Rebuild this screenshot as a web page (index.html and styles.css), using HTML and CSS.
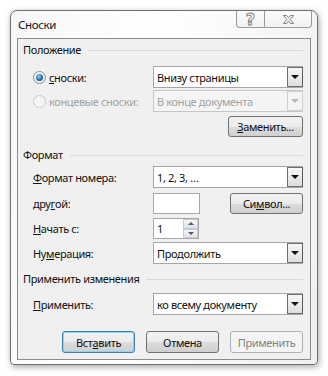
FILE: index.html
```html
<!DOCTYPE html>
<html lang="ru">
<head>
<meta charset="UTF-8">
<title>Сноски</title>
<link rel="stylesheet" href="styles.css">
</head>
<body>

<div class="window">
  <div class="titlebar">
    <span class="title">Сноски</span>
    <div class="caption-btns">
      <span class="cap cap-help"><span class="help-glyph">?</span></span>
      <span class="cap cap-close">
        <svg width="13" height="11" viewBox="0 0 13 11">
          <path d="M1.5 1.5 H4.5 L6.5 3.8 L8.5 1.5 H11.5 L8.2 5.5 L11.5 9.5 H8.5 L6.5 7.2 L4.5 9.5 H1.5 L4.8 5.5 Z" fill="none" stroke="#7d7d7d" stroke-width="1"/>
        </svg>
      </span>
    </div>
  </div>

  <div class="client">
    <div class="group-title">Положение</div>

    <div class="row r-footnote">
      <span class="label"><span class="radio checked"></span><u>с</u>носки:</span>
      <div class="combo"><span class="combo-text">Внизу страницы</span><span class="combo-btn"></span></div>
    </div>
    <div class="row r-endnote">
      <span class="label disabled"><span class="radio"></span>концевые сноски:</span>
      <div class="combo combo-off"><span class="combo-text">В конце документа</span><span class="combo-btn"></span></div>
    </div>
    <div class="row r-convert">
      <button class="btn btn-convert"><u>З</u>аменить...</button>
    </div>

    <div class="group-title g-format">Формат</div>

    <div class="row r-numfmt">
      <span class="label"><u>Ф</u>ормат номера:</span>
      <div class="combo"><span class="combo-text">1, 2, 3, …</span><span class="combo-btn"></span></div>
    </div>
    <div class="row r-custom">
      <span class="label">дру<u>г</u>ой:</span>
      <div class="textbox"></div>
      <button class="btn btn-symbol">Си<u>м</u>вол...</button>
    </div>
    <div class="row r-start">
      <span class="label"><u>Н</u>ачать с:</span>
      <div class="spin">
        <span class="spin-text">1</span>
        <span class="spin-btns"><span class="spin-up"></span><span class="spin-down"></span></span>
      </div>
    </div>
    <div class="row r-numbering">
      <span class="label">Ну<u>м</u>ерация:</span>
      <div class="combo"><span class="combo-text">Продолжить</span><span class="combo-btn"></span></div>
    </div>

    <div class="group-title g-apply">Применить изменения</div>

    <div class="row r-apply">
      <span class="label"><u>П</u>рименить:</span>
      <div class="combo"><span class="combo-text">ко всему документу</span><span class="combo-btn"></span></div>
    </div>

    <div class="actions">
      <button class="btn btn-default">Вст<u>а</u>вить</button>
      <button class="btn">Отмена</button>
      <button class="btn btn-off">Применить</button>
    </div>
  </div>
</div>

</body>
</html>
```

FILE: styles.css
```css
/* dialog */
body {
  margin: 0;
  padding: 10px;
  background: #fff;
  font-family: "Noto Sans", "Open Sans", sans-serif;
  font-size: 11px;
  letter-spacing: -0.35px;
  color: #111;
}

.window {
  width: 308px;
  height: 355px;
  box-sizing: border-box;
  border: 1px solid #6e6e6e;
  border-radius: 7px 7px 4px 4px;
  background: linear-gradient(100deg, #f6f7f8, #ffffff 40%, #eef0f2);
  box-shadow: 1px 2px 6px rgba(0, 0, 0, 0.35);
  padding: 0 6px 4px 6px;
  display: flex;
  flex-direction: column;
}

.titlebar {
  height: 27px;
  display: flex;
  justify-content: space-between;
  align-items: flex-start;
}

.title {
  padding-left: 1px;
  line-height: 27px;
  font-size: 11.5px;
}

.caption-btns {
  display: flex;
  margin-right: -1px;
}

.cap {
  height: 17px;
  box-sizing: border-box;
  border: 1px solid #9a9a9a;
  border-top: none;
  background: linear-gradient(#fbfbfb, #f1f2f3);
  display: flex;
  align-items: center;
  justify-content: center;
}

.cap-help {
  width: 28px;
  border-right: none;
  border-radius: 0 0 0 4px;
}

.cap-close {
  width: 48px;
  border-radius: 0 0 4px 0;
}

.help-glyph {
  font-family: "DejaVu Sans", sans-serif;
  font-size: 16px;
  font-weight: bold;
  letter-spacing: 0;
  color: #fff;
  -webkit-text-stroke: 0.9px #7a7a7a;
  line-height: 1;
  margin-top: 1px;
}

.client {
  flex: 1;
  border: 1px solid #8c8c8c;
  background: #f0f0f0;
  padding: 3px 7px 0 5px;
}

.group-title {
  display: flex;
  align-items: center;
  height: 16px;
  line-height: 16px;
}

.group-title::after {
  content: "";
  flex: 1;
  border-top: 1px solid #d6dadf;
  margin-left: 7px;
}

.g-format {
  margin-top: 10px;
}

.g-apply {
  margin-top: 7px;
}

.row {
  display: flex;
  align-items: center;
  padding-left: 10px;
}

.label {
  width: 120px;
  display: flex;
  align-items: center;
}

.label u, .btn u {
  text-underline-offset: 1px;
}

.disabled {
  color: #a3a3a3;
}

.r-footnote { margin-top: 8px; }
.r-endnote { margin-top: 2px; }
.r-convert { margin-top: 4px; justify-content: flex-end; }
.r-numfmt { margin-top: 3px; }
.r-custom { margin-top: 5px; }
.r-start { margin-top: 4px; }
.r-numbering { margin-top: 3px; }
.r-apply { margin-top: 6px; }

/* radio */
.radio {
  width: 13px;
  height: 13px;
  box-sizing: border-box;
  border-radius: 50%;
  border: 1px solid #8e8f8f;
  background: radial-gradient(circle at 50% 40%, #fff, #e4e4e4);
  margin-right: 3px;
  display: flex;
  align-items: center;
  justify-content: center;
}

.radio.checked::after {
  content: "";
  width: 7px;
  height: 7px;
  border-radius: 50%;
  background: radial-gradient(circle at 40% 35%, #8fd0f5, #1f6aa6 60%, #143f6b);
}

.disabled .radio {
  border-color: #c9c9c9;
  background: #f4f4f4;
}

/* combo box */
.combo {
  width: 150px;
  height: 22px;
  box-sizing: border-box;
  border: 1px solid #a6a6a6;
  background: #fff;
  display: flex;
  align-items: center;
}

.combo-text {
  flex: 1;
  padding-left: 3px;
}

.combo-btn {
  width: 16px;
  height: 20px;
  box-sizing: border-box;
  border: 1px solid #6f6f6f;
  border-right-color: #5a5a5a;
  background: linear-gradient(#f6f6f6, #dedede);
  display: flex;
  align-items: center;
  justify-content: center;
  margin-right: -1px;
}

.combo-btn::after {
  content: "";
  border-left: 4px solid transparent;
  border-right: 4px solid transparent;
  border-top: 4px solid #111;
}

.combo-off {
  background: #f4f4f4;
  border-color: #c6c6c6;
  color: #a3a3a3;
}

.combo-off .combo-btn {
  border-color: #cfcfcf;
  background: #f4f4f4;
}

.combo-off .combo-btn::after {
  border-top-color: #b8b8b8;
}

/* text box and spinner */
.textbox {
  width: 47px;
  height: 21px;
  box-sizing: border-box;
  border: 1px solid #a6a6a6;
  background: #fff;
}

.spin {
  width: 46px;
  height: 21px;
  box-sizing: border-box;
  border: 1px solid #a6a6a6;
  background: #fff;
  display: flex;
}

.spin-text {
  flex: 1;
  padding-left: 3px;
  line-height: 19px;
}

.spin-btns {
  width: 15px;
  display: flex;
  flex-direction: column;
}

.spin-up, .spin-down {
  flex: 1;
  box-sizing: border-box;
  border: 1px solid #c5ccd4;
  background: linear-gradient(#f3f5f8, #dfe4ea);
  display: flex;
  align-items: center;
  justify-content: center;
}

.spin-up::after {
  content: "";
  border-left: 3px solid transparent;
  border-right: 3px solid transparent;
  border-bottom: 3px solid #55595e;
}

.spin-down::after {
  content: "";
  border-left: 3px solid transparent;
  border-right: 3px solid transparent;
  border-top: 3px solid #55595e;
}

/* buttons */
.btn {
  width: 75px;
  height: 21px;
  box-sizing: border-box;
  border: 1px solid #707070;
  border-radius: 3px;
  background: linear-gradient(#f2f2f2 0%, #ebebeb 50%, #dddddd 51%, #cfcfcf 100%);
  font-family: inherit;
  font-size: 11px;
  letter-spacing: inherit;
  color: #111;
  padding: 0;
  line-height: 19px;
}

.btn-symbol {
  margin-left: 30px;
  width: 73px;
}

.actions {
  display: flex;
  justify-content: flex-end;
  gap: 11px;
  margin-top: 16px;
}

.actions .btn {
  width: 73px;
  height: 22px;
}

.btn-default {
  border-color: #3c7fb1;
  box-shadow: inset 0 0 0 1px #8ad4f2;
}

.btn-off {
  border-color: #adb2b5;
  background: #f4f4f4;
  color: #838383;
}
```
